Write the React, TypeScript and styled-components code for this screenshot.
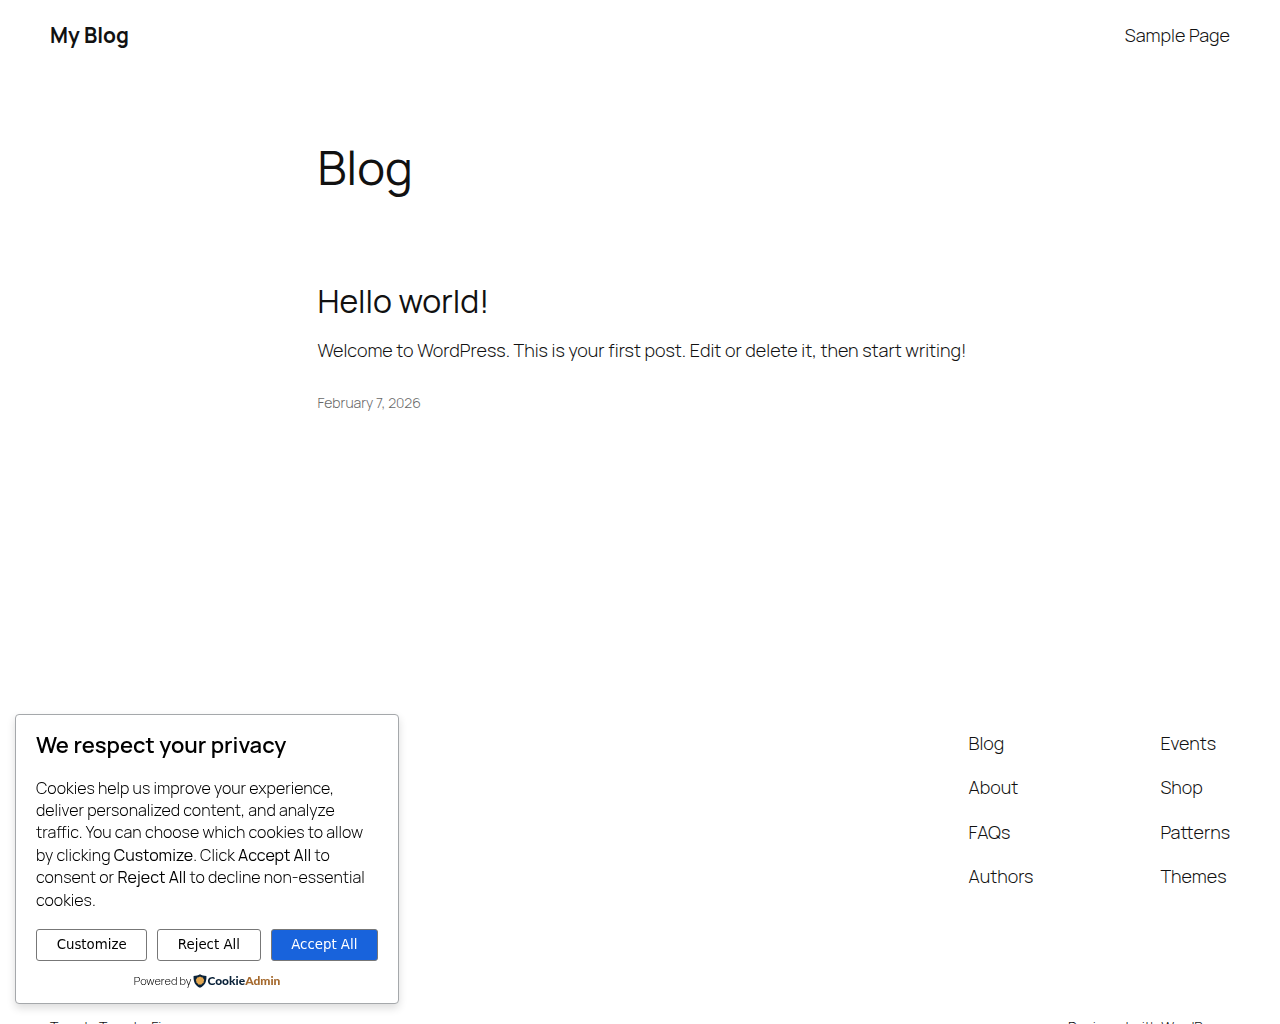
import React from "react";
import styled, { createGlobalStyle } from "styled-components";

const GlobalStyle = createGlobalStyle`
  *, *::before, *::after { box-sizing: border-box; }
  body {
    margin: 0;
    background: #fff;
    color: #111;
    font-family: Manrope, Inter, "Open Sans", sans-serif;
    font-size: 18px;
    font-weight: 300;
    line-height: 1.4;
  }
  h1, h2, p, ul { margin: 0; padding: 0; }
  a { color: inherit; text-decoration: none; }
  a:hover { text-decoration: underline; }
`;

const Header = styled.header`
  display: flex;
  align-items: center;
  justify-content: space-between;
  padding: 20px 50px;
  line-height: 30px;
`;

const SiteTitle = styled.a`
  font-size: 21px;
  font-weight: 700;
`;

const Main = styled.main`
  max-width: 645px;
  margin: 69px auto 0;
`;

const PageTitle = styled.h1`
  font-size: 47px;
  font-weight: 400;
  line-height: 56px;
`;

const Post = styled.article`
  display: flex;
  flex-direction: column;
  gap: 17px;
  margin-top: 86px;
  padding-bottom: 298px;
`;

const PostTitle = styled.h2`
  font-size: 32px;
  font-weight: 400;
  line-height: 40px;
`;

const Excerpt = styled.p`
  @media (min-width: 700px) {
    white-space: nowrap;
  }
`;

const PostDate = styled.time`
  margin-top: 13px;
  font-size: 14px;
  line-height: 20px;
  color: #686868;
`;

const Footer = styled.footer`
  padding: 20px 50px 60px;
`;

const FooterColumns = styled.nav`
  display: flex;
  justify-content: flex-end;
  gap: 127px;
`;

const LinkList = styled.ul`
  display: flex;
  flex-direction: column;
  gap: 19px;
  list-style: none;
`;

const Credits = styled.div`
  display: flex;
  justify-content: space-between;
  margin-top: 128px;
  font-size: 14px;
  line-height: 20px;
`;

const Notice = styled.section`
  position: fixed;
  left: 15px;
  bottom: 20px;
  width: 384px;
  max-width: calc(100% - 30px);
  padding: 14px 20px 12px;
  color: #000;
  background: #fff;
  border: 1px solid #a5a8ab;
  border-radius: 4px;
  box-shadow: 0 4px 8px rgba(0, 0, 0, 0.14);
`;

const NoticeTitle = styled.h2`
  font-size: 22px;
  font-weight: 600;
  line-height: 32px;
`;

const NoticeText = styled.p`
  margin-top: 16px;
  font-size: 16px;

  strong { font-weight: 400; }
`;

const Actions = styled.div`
  display: flex;
  gap: 10px;
  margin-top: 18px;
`;

const Button = styled.button<{ $primary?: boolean }>`
  flex: 1 1 auto;
  height: 32px;
  padding: 0 10px 2px;
  font-family: "DejaVu Sans", sans-serif;
  color: ${(p) => (p.$primary ? "#fff" : "#000")};
  background: ${(p) => (p.$primary ? "#1863dc" : "#fff")};
  border: 1px solid #777;
  border-radius: 3px;
  cursor: pointer;
`;

const PoweredBy = styled.div`
  display: flex;
  align-items: center;
  justify-content: center;
  gap: 2px;
  margin-top: 10px;
  font-size: 11px;
  line-height: 20px;
`;

const Brand = styled.a`
  display: inline-flex;
  align-items: center;
  font-family: Lato, sans-serif;
  font-size: 12px;
  font-weight: 900;
  color: #0a2239;
`;

const BrandAccent = styled.span`
  color: #a5692d;
`;

const COLUMNS = [
  ["Blog", "About", "FAQs", "Authors"],
  ["Events", "Shop", "Patterns", "Themes"],
];

function Shield() {
  return (
    <svg width="14" height="14" viewBox="0 0 14 14" aria-hidden="true">
      <path d="M7 0.3C8.8 1.4 10.8 2 13.4 2C13.8 7.5 12 11.6 7 13.8C2 11.6 0.2 7.5 0.6 2C3.2 2 5.2 1.4 7 0.3Z" fill="#0a2239" />
      <path d="M7 2.6L8.3 3.2L9.8 3.4L10.4 4.8L11.2 6L10.7 7.4L10.5 8.9L9.2 9.6L8.2 10.8L7 10.6L5.6 10.8L4.7 9.6L3.5 8.8L3.3 7.3L2.8 6L3.6 4.8L4.2 3.4L5.7 3.2Z" fill="#e3a750" />
    </svg>
  );
}

export default function App() {
  return (
    <>
      <GlobalStyle />
      <Header>
        <SiteTitle href="#">My Blog</SiteTitle>
        <nav aria-label="Main">
          <a href="#sample-page">Sample Page</a>
        </nav>
      </Header>
      <Main>
        <PageTitle>Blog</PageTitle>
        <Post>
          <PostTitle>
            <a href="#hello-world">Hello world!</a>
          </PostTitle>
          <Excerpt>Welcome to WordPress. This is your first post. Edit or delete it, then start writing!</Excerpt>
          <PostDate dateTime="2026-02-07">
            <a href="#hello-world">February 7, 2026</a>
          </PostDate>
        </Post>
      </Main>
      <Footer>
        <FooterColumns aria-label="Footer">
          {COLUMNS.map((links) => (
            <LinkList key={links[0]}>
              {links.map((label) => (
                <li key={label}>
                  <a href={`#${label.toLowerCase()}`}>{label}</a>
                </li>
              ))}
            </LinkList>
          ))}
        </FooterColumns>
        <Credits>
          <span>Twenty Twenty-Five</span>
          <span>
            Designed with <a href="#wordpress">WordPress</a>
          </span>
        </Credits>
      </Footer>
      <Notice aria-labelledby="privacy-title">
        <NoticeTitle id="privacy-title">We respect your privacy</NoticeTitle>
        <NoticeText>
          Cookies help us improve your experience, deliver personalized content, and analyze traffic. You can choose
          which cookies to allow by clicking <strong>Customize</strong>. Click <strong>Accept All</strong> to consent
          or <strong>Reject All</strong> to decline non-essential cookies.
        </NoticeText>
        <Actions>
          <Button type="button">Customize</Button>
          <Button type="button">Reject All</Button>
          <Button type="button" $primary>
            Accept All
          </Button>
        </Actions>
        <PoweredBy>
          <span>Powered by</span>
          <Brand href="#cookieadmin">
            <Shield />
            Cookie<BrandAccent>Admin</BrandAccent>
          </Brand>
        </PoweredBy>
      </Notice>
    </>
  );
}
